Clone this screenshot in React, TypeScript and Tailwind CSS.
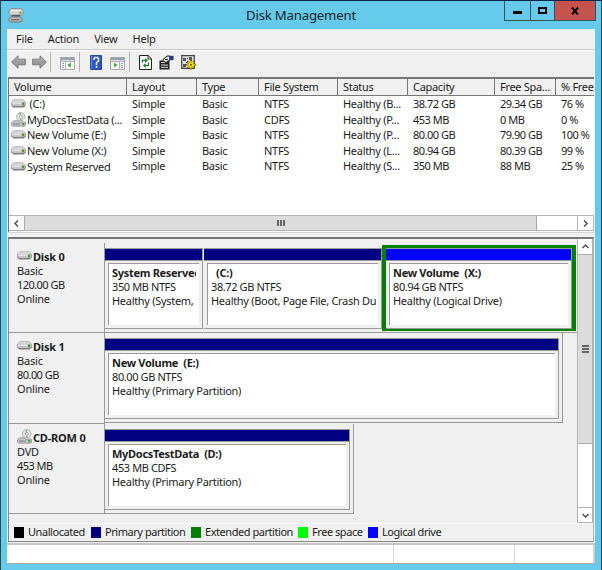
import React from 'react';

interface Volume {
    name: string;
    cd?: boolean;
    fs: string;
    status: string;
    capacity: string;
    free: string;
    percent: string;
}

interface PartitionProps {
    title: string;
    size: string;
    status: string;
    className: string;
    barClass?: string;
}

const volumes: Volume[] = [
    { name: '\u00a0(C:)', fs: 'NTFS', status: 'Healthy (B...', capacity: '38.72 GB', free: '29.34 GB', percent: '76 %' },
    { name: 'MyDocsTestData (...', cd: true, fs: 'CDFS', status: 'Healthy (P...', capacity: '453 MB', free: '0 MB', percent: '0 %' },
    { name: 'New Volume (E:)', fs: 'NTFS', status: 'Healthy (P...', capacity: '80.00 GB', free: '79.90 GB', percent: '100 %' },
    { name: 'New Volume (X:)', fs: 'NTFS', status: 'Healthy (L...', capacity: '80.94 GB', free: '80.39 GB', percent: '99 %' },
    { name: 'System Reserved', fs: 'NTFS', status: 'Healthy (S...', capacity: '350 MB', free: '88 MB', percent: '25 %' },
];

const columns = ['Volume', 'Layout', 'Type', 'File System', 'Status', 'Capacity', 'Free Spa...', '% Free'];

const legend = [
    { label: 'Unallocated', color: 'bg-black', width: 'w-[77px]' },
    { label: 'Primary partition', color: 'bg-[#000080]', width: 'w-[100px]' },
    { label: 'Extended partition', color: 'bg-[#008000]', width: 'w-[107px]' },
    { label: 'Free space', color: 'bg-[#00ff00]', width: 'w-[70px]' },
    { label: 'Logical drive', color: 'bg-[#0000ff]', width: 'w-[90px]' },
];

const gridCols = 'grid grid-cols-[118px_70px_62px_79px_70px_87px_61px_38px]';

function DriveIcon() {
    return (
        <svg width="15" height="9" viewBox="0 0 15 9" className="shrink-0">
            <path d="M3 .8h9.3l2.2 2.4v3L13 7.8H2L.5 6.2v-3z" fill="#c4c4c8" stroke="#a2a2a6" strokeWidth=".8" />
            <path d="M3.2 1.2h8.8l1.6 1.6H1.6z" fill="#dddddf" />
            <path d="M1.2 4.2h9" stroke="#ededef" strokeWidth="1.2" />
            <path d="M1 6.4l1.2 1.4h10.6L14 6.4" fill="none" stroke="#66666a" />
            <path d="M11 3.6h2.2v2.8H11z" fill="#4a9a3a" />
        </svg>
    );
}

function CdIcon() {
    return (
        <svg width="15" height="15" viewBox="0 0 15 15" className="shrink-0">
            <circle cx="9.8" cy="4.8" r="4.3" fill="#e0e2e2" stroke="#a8a8a8" strokeWidth=".8" />
            <path d="M8.4 1l1.1 3 .8-3.2zM8.7 8.8l1.3-3 1.2 3z" fill="#79b982" />
            <circle cx="9.8" cy="4.8" r="1.4" fill="#fff" stroke="#8b8b8b" strokeWidth=".7" />
            <path d="M3 8.8h4l1 1.4h6.5V13l-1 1.2H1.6L.5 13v-2.2z" fill="#c9c9cc" stroke="#8c8c90" strokeWidth=".8" />
            <path d="M2 12h7" stroke="#77777b" />
            <path d="M11.2 11h2v2.2h-2z" fill="#3f9e35" />
        </svg>
    );
}

function Chevron({ d }: { d: string }) {
    return (
        <svg width="7" height="7" viewBox="0 0 7 7">
            <path d={d} fill="none" stroke="#505050" strokeWidth="1.5" />
        </svg>
    );
}

function PaneIcon({ flip }: { flip?: boolean }) {
    return (
        <svg width="15" height="13" viewBox="0 0 15 13" className={flip ? '-scale-x-100' : ''}>
            <path d="M.5 .5h14v12H.5z" fill="#f6f6f6" stroke="#a8a8a8" />
            <path d="M1 1h13v2.3H1z" fill="#9aa3ad" />
            <path d="M5.5 4v8.5M1 4.5h13" stroke="#b5b5b5" />
            <path d="M2 6.5h2M2 8.5h2M2 10.5h2" stroke="#7fa5cf" />
            <path d="M10.8 5.6v4.8L7.6 8z" fill="#2fa62b" />
        </svg>
    );
}

function Arrow({ flip }: { flip?: boolean }) {
    return (
        <svg width="15" height="14" viewBox="0 0 15 14" className={flip ? '-scale-x-100' : ''}>
            <path d="M.7 7L7 .8v3.4h7.3v5.6H7v3.4z" fill="#9c9c9c" stroke="#6f6f6f" strokeWidth=".9" />
            <path d="M2.8 6.5L6 3.2v2h7" fill="none" stroke="#b4b4b4" strokeWidth=".8" />
        </svg>
    );
}

function Divider({ className }: { className: string }) {
    return <div className={`h-[20px] w-px bg-[#b4b4b4] ${className}`} />;
}

function Toolbar() {
    return (
        <div className="flex h-[26px] items-center border-t border-white pb-[3px] pl-[4px]">
            <Arrow />
            <div className="ml-[6px]">
                <Arrow flip />
            </div>
            <Divider className="ml-[3px]" />
            <div className="ml-[9px] mt-[2px]">
                <PaneIcon />
            </div>
            <Divider className="ml-[4px]" />
            <svg width="12" height="15" viewBox="0 0 12 15" className="ml-[10px]">
                <path d="M.5 .5h11v14H.5z" fill="#2e57c8" stroke="#2546a0" />
                <path d="M1.5 1v13" stroke="#7190df" />
                <path d="M4 5V3.5l1-1h2.5l1 1V6L6.5 7.5V10" fill="none" stroke="#fff" strokeWidth="1.5" />
                <path d="M5.7 11h1.7v1.7H5.7z" fill="#fff" />
            </svg>
            <div className="ml-[8px] mt-[2px]">
                <PaneIcon flip />
            </div>
            <Divider className="ml-[4px]" />
            <svg width="13" height="15" viewBox="0 0 13 15" className="ml-[9px]">
                <path d="M.5 .5h8.7l3.3 3.3v10.7H.5z" fill="#fff" stroke="#222" />
                <path d="M9 .5V4h3.5" fill="none" stroke="#222" />
                <path d="M3.4 7.4V5.4h3M9.4 7.6v3h-3" fill="none" stroke="#16852a" strokeWidth="1.3" />
                <path d="M6 3l3 2.4-3 2.4zM6.8 8.2l-3 2.4 3 2.4z" fill="#16852a" />
            </svg>
            <svg width="15" height="15" viewBox="0 0 15 15" className="ml-[7px]">
                <path d="M.5 5.5h10v9H.5z" fill="#222" />
                <path d="M2 7.5h5M2 10h7M2 12.3h7" stroke="#eee" strokeWidth=".9" />
                <path d="M4 4.5L8 1h3v4L7 7.5 4 6z" fill="#ddd" stroke="#222" />
                <path d="M10.5 .8h4v4.4h-4z" fill="#303080" />
                <path d="M6 4.5h3" stroke="#333" />
            </svg>
            <svg width="15" height="15" viewBox="0 0 15 15" className="ml-[7px]">
                <path d="M.7 .7h12.6v12.6H.7z" fill="#ddd" stroke="#444" strokeWidth="1.2" />
                <path d="M2 3h3v3H2zM2 9h3v3H2zM8 2h3v3H8z" fill="#555" />
                <path d="M6 3l1 1M5 8l2-2" stroke="#333" />
                <path d="M10 5v9.5M5.3 9.8h9.4M6.7 6.5l6.6 6.6M13.3 6.5l-6.6 6.6" stroke="#5b5500" strokeWidth="1.9" />
                <path d="M10 5.8v8M6 9.8h8M7.2 7l5.6 5.6M12.8 7l-5.6 5.6" stroke="#f4df00" strokeWidth="1.2" />
                <circle cx="10" cy="9.8" r="2.5" fill="#f4df00" />
                <circle cx="10" cy="9.8" r="1" fill="#555" />
            </svg>
        </div>
    );
}

function TitleBar() {
    return (
        <div className="flex h-[28px] items-start">
            <svg width="16" height="15" viewBox="0 0 16 15" className="ml-[7px] mt-[7px]">
                <path d="M3 .6h10l2 2v3l-1.5 1.6h-11L1 5.6v-3z" fill="#d3d3d3" stroke="#8b8b8b" />
                <path d="M4 7h8v2H4z" fill="#555" />
                <path d="M3 8.7h9l2 2v2L12.8 14H2L.8 12.5v-2z" fill="#b3b3b3" stroke="#777" />
                <path d="M3 11.7h8" stroke="#5c5c5c" />
                <path d="M11.3 4h2v1.8h-2z" fill="#2fb52b" />
                <path d="M3 2.5h9" stroke="#fff" />
            </svg>
            <h1 className="ml-[222px] w-[258px] pt-[4px] text-[13.2px] leading-[20px] text-[#17242a]">Disk Management</h1>
            <div className="flex h-[20px] w-[92px] border-x border-b border-[#34505c]">
                <div className="flex w-[26px] items-center justify-center border-r border-[#34505c]">
                    <div className="mt-[4px] h-[3px] w-[9px] bg-black" />
                </div>
                <div className="flex w-[24px] items-center justify-center border-r border-[#34505c]">
                    <div className="h-[7px] w-[9px] border-2 border-black" />
                </div>
                <div className="flex flex-1 items-center justify-center bg-[#c4544d]">
                    <svg width="8" height="8" viewBox="0 0 8 8">
                        <path d="M1 0.5l6 7M7 0.5l-6 7" stroke="#000" strokeWidth="2" />
                    </svg>
                </div>
            </div>
        </div>
    );
}

function VolumeList() {
    return (
        <div className="ml-px h-[155px] w-[586px] overflow-hidden border-l border-t-2 border-[#777] bg-white">
            <div className={`${gridCols} h-[17px] border-b border-[#777] bg-[#f0f0f0]`}>
                {columns.map((column) => (
                    <div
                        key={column}
                        className="whitespace-nowrap border-r border-[#777] pl-[5px] leading-[16px] tracking-[-0.3px] last:border-r-0"
                    >
                        {column}
                    </div>
                ))}
            </div>
            <div className="h-[119px]">
                {volumes.map((volume) => (
                    <div
                        key={volume.name}
                        className={`${gridCols} h-[15.6px] whitespace-nowrap leading-[15px] tracking-[-0.3px]`}
                    >
                        <div className="flex items-center pl-[2px]">
                            {volume.cd ? <CdIcon /> : <DriveIcon />}
                            <span className="ml-px">{volume.name}</span>
                        </div>
                        <div className="pl-[5px]">Simple</div>
                        <div className="pl-[5px]">Basic</div>
                        <div className="pl-[5px]">{volume.fs}</div>
                        <div className="pl-[5px]">{volume.status}</div>
                        <div className="pl-[5px] tracking-[-0.5px]">{volume.capacity}</div>
                        <div className="pl-[5px] tracking-[-0.5px]">{volume.free}</div>
                        <div className="pl-[5px] tracking-[-0.5px]">{volume.percent}</div>
                    </div>
                ))}
            </div>
            <div className="flex h-[16px] border border-l-0 border-[#b4b4b4]">
                <div className="flex w-[15px] items-center justify-center">
                    <Chevron d="M5 .5L2 3.5l3 3" />
                </div>
                <div className="flex w-[513px] items-center justify-center gap-px border-x border-[#aaa] bg-[#dcdcdc]">
                    <div className="h-[6px] w-[2px] bg-[#666]" />
                    <div className="h-[6px] w-[2px] bg-[#666]" />
                    <div className="h-[6px] w-[2px] bg-[#666]" />
                </div>
                <div className="w-[40px]" />
                <div className="flex flex-1 items-center justify-center border-l border-[#b4b4b4]">
                    <Chevron d="M2 .5l3 3-3 3" />
                </div>
            </div>
        </div>
    );
}

function DiskInfo({ name, kind, size, cd }: { name: string; kind: string; size: string; cd?: boolean }) {
    return (
        <div className="w-[96px] shrink-0 border-b border-r border-[#999] pl-[8px] pt-[7px]">
            <div className="flex h-[14px] items-center font-bold tracking-[-0.2px]">
                <div className={cd ? '-mt-[4px]' : '-mt-[3px]'}>{cd ? <CdIcon /> : <DriveIcon />}</div>
                <span className="ml-px">{name}</span>
            </div>
            <div>{kind}</div>
            <div className="tracking-[-0.55px]">{size}</div>
            <div>Online</div>
        </div>
    );
}

function Partition({ title, size, status, className, barClass = 'bg-[#000080]' }: PartitionProps) {
    return (
        <div className={`flex h-[81px] flex-col border-b border-r border-[#999] ${className}`}>
            <div className={`h-[13px] shrink-0 border-y border-[#999] ${barClass}`} />
            <div className="flex-1 bg-[#f0f0f0] pb-[3px] pl-[3px] pr-[3px] pt-[2px]">
                <div className="h-full whitespace-nowrap border-l border-t border-[#999] bg-white pl-[3px] pr-[3px] pt-[2px]">
                    <div className="overflow-hidden whitespace-pre font-bold tracking-[-0.3px]">{title}</div>
                    <div className="tracking-[-0.4px]">{size}</div>
                    <div className="tracking-[-0.3px]">{status}</div>
                </div>
            </div>
        </div>
    );
}

function DiskMap() {
    return (
        <div className="flex h-[284px]">
            <div className="w-[568px] pt-[4px] leading-[13.9px]">
                <div className="flex h-[90px]">
                    <DiskInfo name="Disk 0" kind="Basic" size="120.00 GB" />
                    <div className="flex flex-1 border-b border-[#999] pt-[5px]">
                        <Partition title="System Reserved" size="350 MB NTFS" status="Healthy (System," className="w-[98px]" />
                        <Partition
                            title="  (C:)"
                            size="38.72 GB NTFS"
                            status="Healthy (Boot, Page File, Crash Du"
                            className="ml-px w-[178px]"
                        />
                        <div className="-mt-[3px] h-[86px] w-[194px] border-y-[3px] border-l-[4px] border-r-[4px] border-[#008000]">
                            <Partition
                                title="New Volume  (X:)"
                                size="80.94 GB NTFS"
                                status="Healthy (Logical Drive)"
                                className="w-full"
                                barClass="bg-[#0000ff]"
                            />
                        </div>
                    </div>
                </div>
                <div className="flex h-[91px]">
                    <DiskInfo name="Disk 1" kind="Basic" size="80.00 GB" />
                    <div className="mb-px w-[458px] border-b border-r border-[#999] pt-[5px]">
                        <Partition
                            title="New Volume  (E:)"
                            size="80.00 GB NTFS"
                            status="Healthy (Primary Partition)"
                            className="w-[454px]"
                        />
                    </div>
                </div>
                <div className="flex h-[90px]">
                    <DiskInfo name="CD-ROM 0" kind="DVD" size="453 MB" cd />
                    <div className="w-[249px] border-b border-r border-[#999] pt-[5px]">
                        <Partition
                            title="MyDocsTestData  (D:)"
                            size="453 MB CDFS"
                            status="Healthy (Primary Partition)"
                            className="w-[245px]"
                        />
                    </div>
                </div>
            </div>
            <div className="flex flex-1 flex-col border-x border-b border-[#b4b4b4] bg-white">
                <div className="flex h-[15px] items-center justify-center">
                    <Chevron d="M.5 5l3-3 3 3" />
                </div>
                <div className="flex h-[190px] flex-col items-center justify-center gap-px border-y border-[#aaa] bg-[#dcdcdc]">
                    <div className="h-[2px] w-[7px] bg-[#666]" />
                    <div className="h-[2px] w-[7px] bg-[#666]" />
                    <div className="h-[2px] w-[7px] bg-[#666]" />
                </div>
                <div className="flex-1" />
                <div className="flex h-[15px] items-center justify-center border-t border-[#b4b4b4]">
                    <Chevron d="M.5 2l3 3 3-3" />
                </div>
            </div>
        </div>
    );
}

export default function App() {
    return (
        <div className="h-[570px] w-[602px] overflow-hidden border-x border-t border-x-[#39434d] border-t-[#0a2350] bg-[#66cbea] font-['Noto_Sans','Open_Sans',sans-serif] text-[11px] tracking-[-0.2px] text-[#1c1c1c]">
            <TitleBar />
            <div className="ml-[6px] h-[535px] w-[588px] bg-[#f0f0f0]">
                <div className="flex h-[21px] gap-[15px] border-b border-[#c8c8c8] pl-[9px] leading-[20px]">
                    <span>File</span>
                    <span>Action</span>
                    <span>View</span>
                    <span>Help</span>
                </div>
                <Toolbar />
                <div className="h-px" />
                <VolumeList />
                <div className="ml-px h-[5px] w-[586px] border-t border-[#d5d5d5]" />
                <div className="ml-px h-[305px] w-[586px] border-b border-l border-r border-t-2 border-[#888] border-r-[#b4b4b4] border-t-[#777]">
                    <DiskMap />
                    <div className="flex h-[18px] items-center border-t border-[#f9f9f9] pb-px pl-[5px] tracking-[-0.45px]">
                        {legend.map((item) => (
                            <div key={item.label} className={`flex items-center gap-[4px] whitespace-nowrap ${item.width}`}>
                                <div className={`h-[11px] w-[10px] shrink-0 ${item.color}`} />
                                <span>{item.label}</span>
                            </div>
                        ))}
                    </div>
                </div>
                <div className="mt-px flex h-[21px] border-b border-t-2 border-b-[#aaa] border-t-[#c8c8c8] bg-white">
                    <div className="w-[386px]" />
                    <div className="w-[122px] border-x border-[#d8d8d8]" />
                    <div className="flex-1 border-r-2 border-[#d0d0d0]" />
                </div>
            </div>
        </div>
    );
}
